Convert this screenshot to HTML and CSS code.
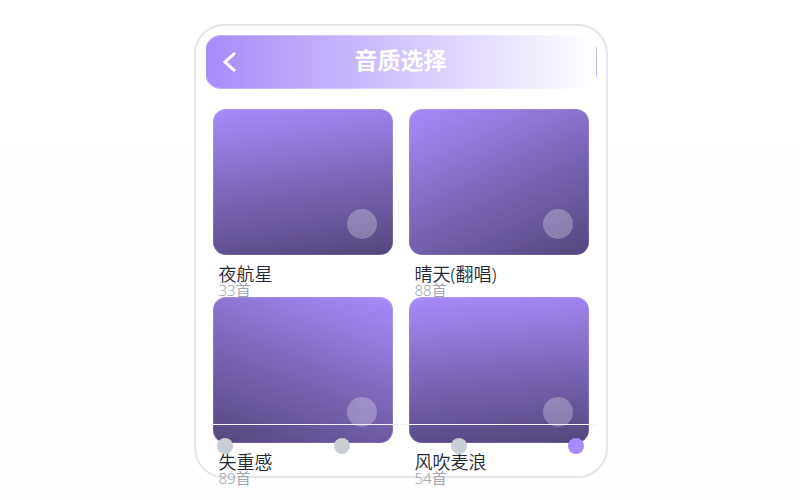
FILE: index.html
```html
<!DOCTYPE html>
<html lang="zh-CN">
<head>
  <meta charset="UTF-8">
  <meta name="viewport" content="width=device-width, initial-scale=1.0">
  <title>音质选择</title>
  <link rel="stylesheet" href="styles.css">
</head>
<body>
  <main class="phone">
    <header class="header">
      <button class="back" type="button" aria-label="返回">
        <svg width="16" height="22" viewBox="0 0 16 22" fill="none" stroke="#fff" stroke-width="3"><path d="M13 2 L3 11 L13 20"/></svg>
      </button>
      <h1 class="title">音质选择</h1>
    </header>

    <section class="grid">
      <article class="song">
        <div class="cover cover-a"><span class="play"></span></div>
        <h2 class="name">夜航星</h2>
        <p class="count">33首</p>
      </article>
      <article class="song">
        <div class="cover cover-b"><span class="play"></span></div>
        <h2 class="name">晴天(翻唱)</h2>
        <p class="count">88首</p>
      </article>
      <article class="song">
        <div class="cover cover-c"><span class="play"></span></div>
        <h2 class="name">失重感</h2>
        <p class="count">89首</p>
      </article>
      <article class="song">
        <div class="cover cover-d"><span class="play"></span></div>
        <h2 class="name">风吹麦浪</h2>
        <p class="count">54首</p>
      </article>
    </section>

    <nav class="tabs">
      <button class="dot" type="button" aria-label="首页"></button>
      <button class="dot" type="button" aria-label="发现"></button>
      <button class="dot" type="button" aria-label="歌单"></button>
      <button class="dot active" type="button" aria-label="我的"></button>
    </nav>
  </main>
</body>
</html>
```

FILE: styles.css
```css
* {
  box-sizing: border-box;
}

body {
  margin: 0;
  min-height: 100vh;
  padding: 2px 0 0 1px;
  display: flex;
  justify-content: center;
  align-items: center;
  background: linear-gradient(#ffffff, #fdfdfd);
  font-family: "Noto Sans", "Noto Sans CJK SC", sans-serif;
}

.phone {
  display: flex;
  flex-direction: column;
  width: 100%;
  max-width: 414px;
  height: 454px;
  padding: 9px;
  border: 2px solid #e5e5ea;
  border-radius: 30px;
  background: #fff;
}

.header {
  display: grid;
  grid-template-columns: 32px 1fr 32px;
  align-items: center;
  flex: none;
  height: 54px;
  padding: 0 8px;
  border: 1px solid rgba(255, 255, 255, 0.3);
  border-radius: 16px;
  background: linear-gradient(90deg, #a78bfa, #ffffff);
}

.back {
  display: flex;
  justify-content: center;
  padding: 0;
  border: 0;
  background: none;
}

.title {
  margin: 0;
  padding-bottom: 4px;
  color: #fff;
  font-size: 23px;
  line-height: 32px;
  font-weight: 700;
  text-align: center;
}

.grid {
  flex: 1;
  min-height: 0;
  display: grid;
  grid-template-columns: 1fr 1fr;
  grid-auto-rows: 188px;
  column-gap: 16px;
  padding: 20px 8px 0;
}

.cover {
  display: flex;
  justify-content: flex-end;
  align-items: flex-end;
  height: 146px;
  padding: 15px;
  border: 1px solid rgba(255, 255, 255, 0.12);
  border-radius: 13px;
  background-origin: border-box;
}

.cover-a { background-image: linear-gradient(172deg, #a78bfa, #54457d); }
.cover-b { background-image: linear-gradient(155deg, #a78bfa, #54457d); }
.cover-c { background-image: linear-gradient(200deg, #a78bfa, #54457d); }
.cover-d { background-image: linear-gradient(175deg, #a78bfa, #54457d); }

.play {
  width: 30px;
  height: 30px;
  border-radius: 50%;
  background: rgba(255, 255, 255, 0.27);
}

.name {
  margin: 9px 0 0;
  padding-left: 6px;
  color: #1f2937;
  font-size: 18px;
  line-height: 20px;
  font-weight: 350;
}

.count {
  margin: 0;
  padding-left: 6px;
  color: #9ca3af;
  font-size: 15px;
  line-height: 12px;
  font-weight: 350;
}

/* sits above the part of the grid that runs past its box */
.tabs {
  z-index: 1;
  display: flex;
  justify-content: space-between;
  align-items: center;
  flex: none;
  height: 43px;
  padding: 0 12px;
  border-top: 1px solid #f3f4f6;
  border-radius: 2px;
}

.dot {
  width: 16px;
  height: 16px;
  padding: 0;
  border: 0;
  border-radius: 50%;
  background: #c9cdd4;
}

.dot.active {
  background: #a78bfa;
}
```
